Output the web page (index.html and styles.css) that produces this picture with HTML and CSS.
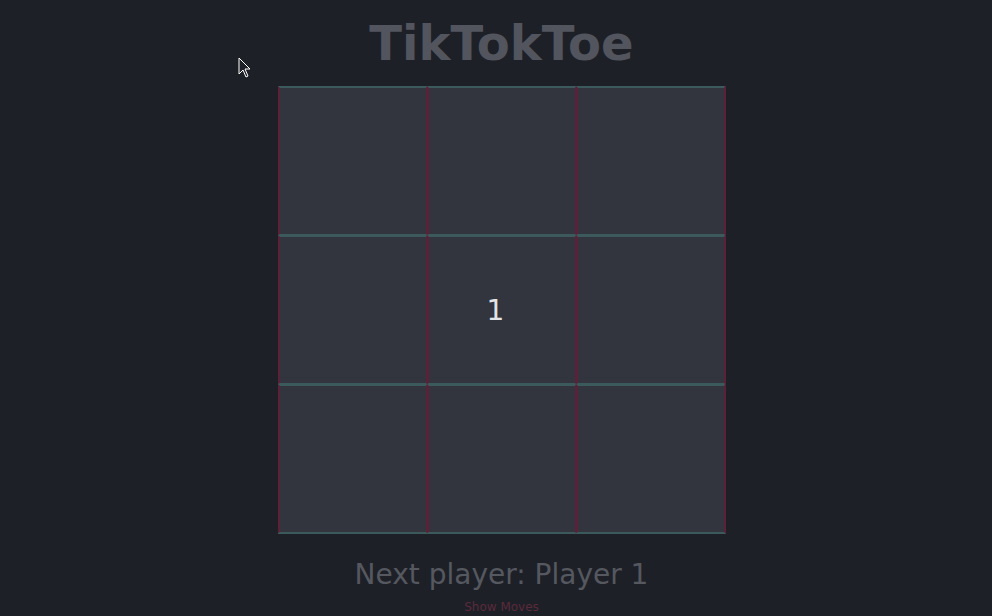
FILE: index.html
```html
<!DOCTYPE html>
<html>
<head>
<meta charset="utf-8">
<link rel="stylesheet" href="styles.css">
</head>
<body>
<div class="app">
  <h1 class="title">TikTokToe</h1>
  <div class="board">
    <div class="cell"></div>
    <div class="cell"></div>
    <div class="cell"></div>
    <div class="cell"></div>
    <div class="cell">1</div>
    <div class="cell"></div>
    <div class="cell"></div>
    <div class="cell"></div>
    <div class="cell"></div>
  </div>
  <div class="status">Next player: Player 1</div>
  <div class="moves">Show Moves</div>
</div>
<svg class="cursor" width="14" height="22" viewBox="0 0 14 22">
  <path d="M1 1 L1 17 L5 13 L8 20 L10 19 L7 12 L12 12 Z" fill="#1e2029" stroke="#ffffff" stroke-width="1"/>
</svg>
</body>
</html>
```
FILE: styles.css
```css
html, body {
  margin: 0;
  padding: 0;
  background: #1e2028;
  height: 100%;
}
body {
  font-family: "DejaVu Sans", sans-serif;
}
.app {
  display: flex;
  flex-direction: column;
  align-items: center;
  padding-top: 13px;
  padding-left: 11px;
}
.title {
  margin: 0 0 13px 0;
  font-size: 48px;
  line-height: 60px;
  font-weight: bold;
  color: #52555d;
}
.board {
  display: grid;
  grid-template-columns: repeat(3, 149px);
  grid-template-rows: repeat(3, 149px);
  border-right: 1px solid #5a2139;
  border-bottom: 1px solid #3c5a5c;
}
.cell {
  box-sizing: border-box;
  background: #32353e;
  border-left: 2px solid #5a2139;
  border-right: 1px solid #5a2139;
  border-top: 2px solid #3c5a5c;
  border-bottom: 1px solid #3c5a5c;
  display: flex;
  align-items: center;
  justify-content: center;
  color: #e2e4e8;
  font-size: 28px;
  padding-right: 12px;
}
.status {
  margin-top: 24px;
  font-size: 28px;
  line-height: 34px;
  color: #55585f;
}
.moves {
  margin-top: 7px;
  font-size: 12px;
  line-height: 16px;
  color: #5a2a3a;
}
.cursor {
  position: absolute;
  left: 238px;
  top: 57px;
}
```
